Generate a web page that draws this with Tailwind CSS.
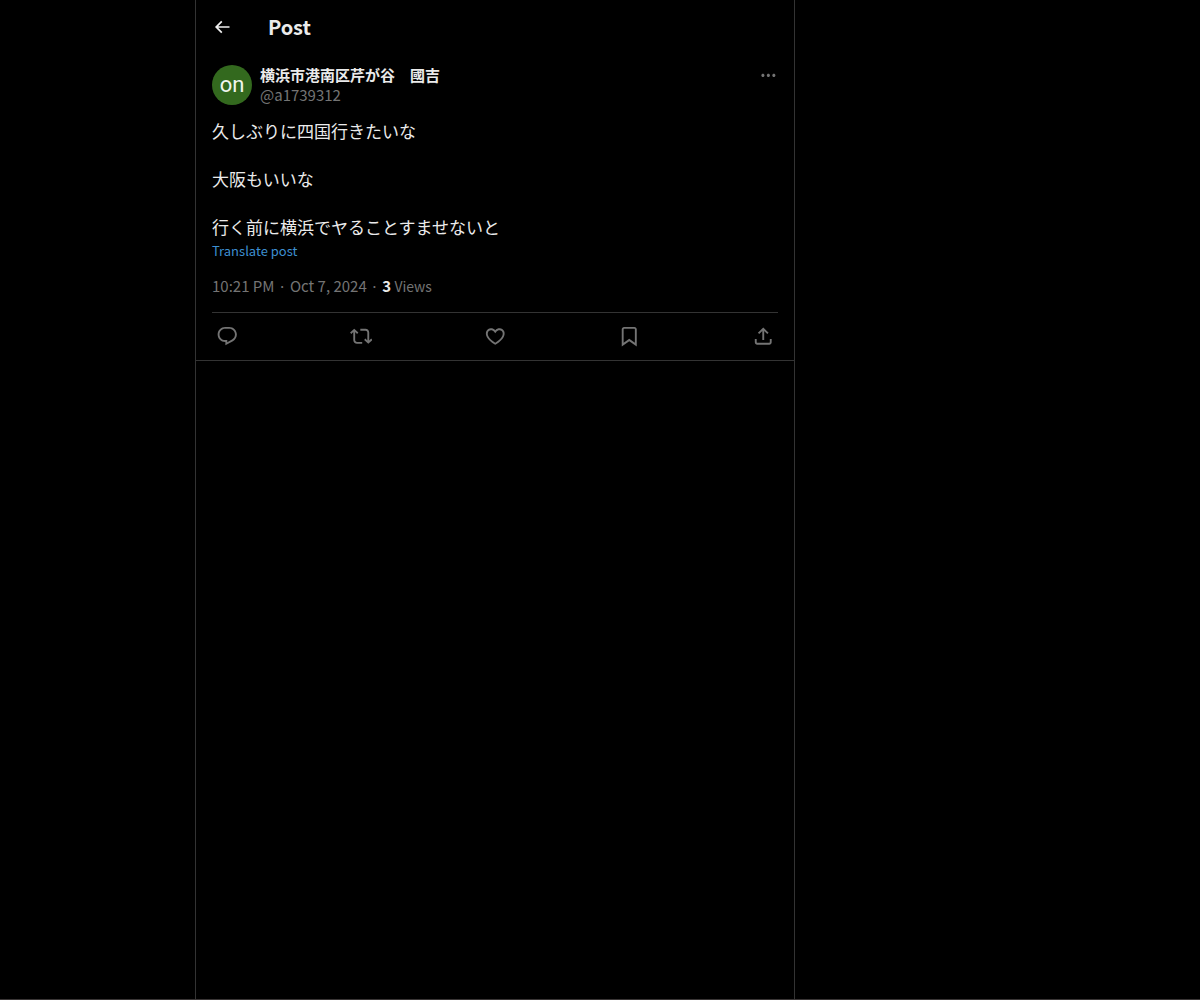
<!DOCTYPE html>
<html lang="en">

<head>
	<meta charset="UTF-8">
	<meta name="viewport" content="width=device-width, initial-scale=1.0">
	<title>Post</title>
	<script src="https://cdn.jsdelivr.net/npm/@tailwindcss/browser@4"></script>
</head>

<body class="h-screen overflow-hidden bg-black border-b border-[#3a3636] font-['Noto_Sans_CJK_JP',sans-serif] text-[#ebebeb]">
	<main class="ml-[195px] w-[600px] h-full border-x border-[#333]">
		<!-- header -->
		<header class="flex items-center h-[53px] px-4">
			<button class="w-14 pt-px">
				<svg class="size-5" viewBox="0 0 24 24" fill="#f0f0f0">
					<path d="M7.414 13l5.043 5.04-1.414 1.42L3.586 12l7.457-7.46 1.414 1.42L7.414 11H21v2H7.414z" />
				</svg>
			</button>
			<h1 class="text-xl leading-6 font-bold tracking-[-0.1px]">Post</h1>
		</header>

		<article class="border-b border-[#333] px-4 pt-3">
			<!-- author -->
			<div class="flex gap-2">
				<div class="flex items-center justify-center size-10 rounded-full bg-[#33691e] text-[#f0f5ee] text-[22px] leading-none font-['Roboto',sans-serif] pb-px">on</div>
				<div class="flex-1 text-[15px] leading-5">
					<p class="font-bold" lang="ja">横浜市港南区芹が谷　國吉</p>
					<p class="text-[#747474]">@a1739312</p>
				</div>
				<svg class="size-[18.75px] mt-px" viewBox="0 0 24 24" fill="#747474">
					<path d="M3 12c0-1.1.9-2 2-2s2 .9 2 2-.9 2-2 2-2-.9-2-2zm9 2c1.1 0 2-.9 2-2s-.9-2-2-2-2 .9-2 2 .9 2 2 2zm7 0c1.1 0 2-.9 2-2s-.9-2-2-2-2 .9-2 2 .9 2 2 2z" />
				</svg>
			</div>

			<div class="mt-3.5 text-[17px] leading-6" lang="ja">
				<p>久しぶりに四国行きたいな</p>
				<p class="mt-6">大阪もいいな</p>
				<p class="mt-6">行く前に横浜でヤることすませないと</p>
			</div>
			<a class="block text-[13px] leading-4 mt-1 text-[#3d8fd1]">Translate post</a>

			<p class="mt-[17px] text-[15px] leading-5 text-[#747474]">10:21 PM<span class="px-[3.5px]">·</span>Oct 7, 2024<span class="px-[3.5px]">·</span><b class="text-[#ebebeb]">3</b> <span class="text-sm leading-5">Views</span></p>

			<!-- actions -->
			<div class="flex items-center justify-between mt-4 h-12 pl-1 pr-1 border-t border-[#333] text-[#747474]">
				<svg class="size-[22.5px]" viewBox="0 0 24 24" fill="currentColor">
					<path d="M1.751 10c0-4.42 3.584-8 8.005-8h4.366c4.49 0 8.129 3.64 8.129 8.13 0 2.96-1.607 5.68-4.196 7.11l-8.054 4.46v-3.69h-.067c-4.49.1-8.183-3.51-8.183-8.01zm8.005-6c-3.317 0-6.005 2.69-6.005 6 0 3.37 2.77 6.08 6.138 6.01l.351-.01h1.761v2.3l5.087-2.81c1.951-1.08 3.163-3.13 3.163-5.36 0-3.39-2.744-6.13-6.129-6.13H9.756z" />
				</svg>
				<svg class="size-[22.5px]" viewBox="0 0 24 24" fill="currentColor">
					<path d="M4.5 3.88l4.432 4.14-1.364 1.46L5.5 7.55V16c0 1.1.896 2 2 2H13v2H7.5c-2.209 0-4-1.79-4-4V7.55L1.432 9.48.068 8.02 4.5 3.88zM16.5 6H11V4h5.5c2.209 0 4 1.79 4 4v8.45l2.068-1.93 1.364 1.46-4.432 4.14-4.432-4.14 1.364-1.46 2.068 1.93V8c0-1.1-.896-2-2-2z" />
				</svg>
				<svg class="size-[22.5px]" viewBox="0 0 24 24" fill="currentColor">
					<path d="M16.697 5.5c-1.222-.06-2.679.51-3.89 2.16l-.805 1.09-.806-1.09C9.984 6.01 8.526 5.44 7.304 5.5c-1.243.07-2.349.78-2.91 1.91-.552 1.12-.633 2.78.479 4.82 1.074 1.97 3.257 4.27 7.129 6.61 3.87-2.34 6.052-4.64 7.126-6.61 1.111-2.04 1.03-3.7.477-4.82-.561-1.13-1.666-1.84-2.908-1.91zm4.187 7.69c-1.351 2.48-4.001 5.12-8.379 7.67l-.503.3-.504-.3c-4.379-2.55-7.029-5.19-8.382-7.67-1.36-2.5-1.41-4.86-.514-6.67.887-1.79 2.647-2.91 4.601-3.01 1.651-.09 3.368.56 4.798 2.01 1.429-1.45 3.146-2.1 4.796-2.01 1.954.1 3.714 1.22 4.601 3.01.896 1.81.846 4.17-.514 6.67z" />
				</svg>
				<svg class="size-[22.5px]" viewBox="0 0 24 24" fill="currentColor">
					<path d="M4 4.5C4 3.12 5.119 2 6.5 2h11C18.881 2 20 3.12 20 4.5v18.44l-8-5.71-8 5.71V4.5zM6.5 4c-.276 0-.5.22-.5.5v14.56l6-4.29 6 4.29V4.5c0-.28-.224-.5-.5-.5h-11z" />
				</svg>
				<svg class="size-[22.5px]" viewBox="0 0 24 24" fill="currentColor">
					<path d="M12 2.59l5.7 5.7-1.41 1.42L13 6.41V16h-2V6.41l-3.3 3.3-1.41-1.42L12 2.59zM21 15l-.02 3.51c0 1.38-1.12 2.49-2.5 2.49H5.5C4.11 21 3 19.88 3 18.5V15h2v3.5c0 .28.22.5.5.5h12.98c.28 0 .5-.22.5-.5L19 15h2z" />
				</svg>
			</div>
		</article>
	</main>
</body>

</html>
